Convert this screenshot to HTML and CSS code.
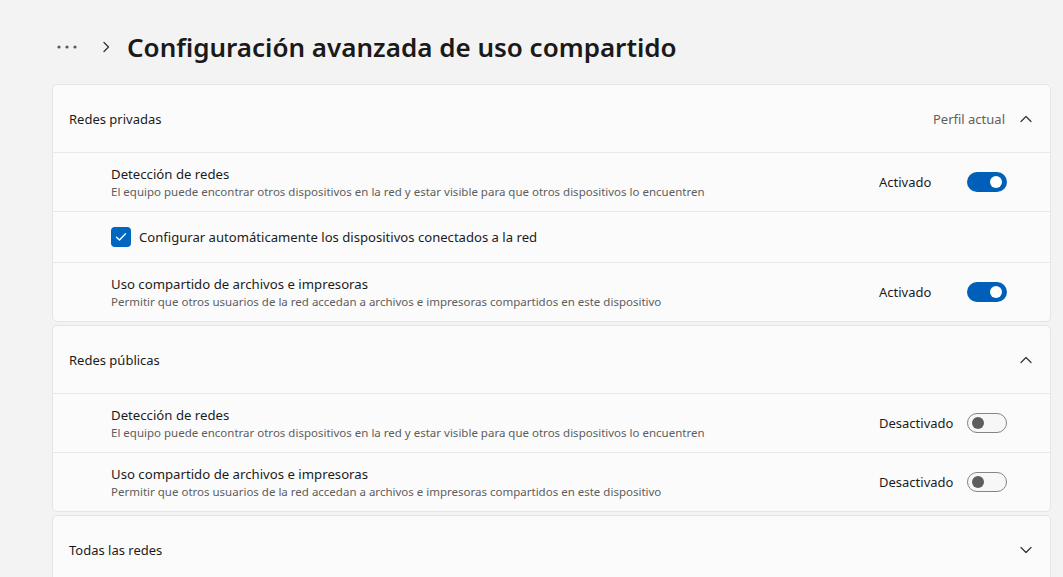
FILE: index.html
```html
<!DOCTYPE html>
<html lang="es">
<head>
<meta charset="utf-8">
<link rel="stylesheet" href="styles.css">
</head>
<body>
<div class="page">
  <div class="crumbs">
    <svg class="dots" width="24" height="6" viewBox="0 0 24 6"><circle cx="3" cy="3" r="1.6" fill="#5a5a5a"/><circle cx="11" cy="3" r="1.6" fill="#5a5a5a"/><circle cx="19" cy="3" r="1.6" fill="#5a5a5a"/></svg>
    <svg class="sep" width="8" height="12" viewBox="0 0 8 12"><path d="M2 1.5 L6.5 6 L2 10.5" fill="none" stroke="#333" stroke-width="1.3" stroke-linecap="round" stroke-linejoin="round"/></svg>
    <h1 class="title">Configuración avanzada de uso compartido</h1>
  </div>

  <div class="cards">
    <section class="card">
      <div class="card-head">
        <span class="head-title">Redes privadas</span>
        <span class="head-right">
          <span class="head-note">Perfil actual</span>
          <svg class="chev" width="12" height="8" viewBox="0 0 12 8"><path d="M1 6.5 L6 1.5 L11 6.5" fill="none" stroke="#333" stroke-width="1.2" stroke-linecap="round" stroke-linejoin="round"/></svg>
        </span>
      </div>
      <div class="row">
        <div class="text">
          <div class="row-title">Detección de redes</div>
          <div class="row-desc">El equipo puede encontrar otros dispositivos en la red y estar visible para que otros dispositivos lo encuentren</div>
        </div>
        <div class="ctrl"><span class="state">Activado</span><span class="toggle on"><span class="knob"></span></span></div>
      </div>
      <div class="row row-check">
        <span class="checkbox"><svg width="12" height="10" viewBox="0 0 12 10"><path d="M1.5 5.2 L4.5 8 L10.5 1.8" fill="none" stroke="#fff" stroke-width="1.3" stroke-linecap="round" stroke-linejoin="round"/></svg></span>
        <span class="check-label">Configurar automáticamente los dispositivos conectados a la red</span>
      </div>
      <div class="row">
        <div class="text">
          <div class="row-title">Uso compartido de archivos e impresoras</div>
          <div class="row-desc">Permitir que otros usuarios de la red accedan a archivos e impresoras compartidos en este dispositivo</div>
        </div>
        <div class="ctrl"><span class="state">Activado</span><span class="toggle on"><span class="knob"></span></span></div>
      </div>
    </section>

    <section class="card">
      <div class="card-head">
        <span class="head-title">Redes públicas</span>
        <span class="head-right">
          <svg class="chev" width="12" height="8" viewBox="0 0 12 8"><path d="M1 6.5 L6 1.5 L11 6.5" fill="none" stroke="#333" stroke-width="1.2" stroke-linecap="round" stroke-linejoin="round"/></svg>
        </span>
      </div>
      <div class="row">
        <div class="text">
          <div class="row-title">Detección de redes</div>
          <div class="row-desc">El equipo puede encontrar otros dispositivos en la red y estar visible para que otros dispositivos lo encuentren</div>
        </div>
        <div class="ctrl"><span class="state">Desactivado</span><span class="toggle off"><span class="knob"></span></span></div>
      </div>
      <div class="row">
        <div class="text">
          <div class="row-title">Uso compartido de archivos e impresoras</div>
          <div class="row-desc">Permitir que otros usuarios de la red accedan a archivos e impresoras compartidos en este dispositivo</div>
        </div>
        <div class="ctrl"><span class="state">Desactivado</span><span class="toggle off"><span class="knob"></span></span></div>
      </div>
    </section>

    <section class="card">
      <div class="card-head">
        <span class="head-title">Todas las redes</span>
        <span class="head-right">
          <svg class="chev" width="12" height="8" viewBox="0 0 12 8"><path d="M1 1.5 L6 6.5 L11 1.5" fill="none" stroke="#333" stroke-width="1.2" stroke-linecap="round" stroke-linejoin="round"/></svg>
        </span>
      </div>
    </section>
  </div>
</div>
</body>
</html>
```
FILE: styles.css
```css
html, body {
  margin: 0;
  padding: 0;
  background: #f3f3f3;
  height: 100%;
  overflow: hidden;
}
body {
  font-family: "Noto Sans", "Open Sans", sans-serif;
  color: #1b1b1b;
}
.page {
  padding-left: 52px;
  width: 999px;
}
.crumbs {
  display: flex;
  align-items: center;
  height: 74px;
  padding: 10px 0 0 4px;
}
.dots { margin-right: 22px; }
.sep { margin-right: 17px; }
.title {
  margin: 0;
  font-size: 26px;
  font-weight: 600;
  color: #1a1a1a;
}
.cards {
  display: flex;
  flex-direction: column;
  gap: 3px;
}
.card {
  background: #fbfbfb;
  border: 1px solid #e5e5e5;
  border-radius: 5px;
}
.card-head {
  height: 67px;
  display: flex;
  align-items: center;
  justify-content: space-between;
  padding: 0 18px 0 16px;
}
.head-title { font-size: 13px; }
.head-right {
  display: flex;
  align-items: center;
  gap: 15px;
}
.head-note { font-size: 13px; color: #5f5f5f; }
.row {
  display: flex;
  align-items: center;
  justify-content: space-between;
  height: 58px;
  border-top: 1px solid #e8e8e8;
  padding: 0 43px 0 58px;
}
.row-check {
  height: 50px;
  justify-content: flex-start;
  gap: 8px;
}
.row-title { font-size: 13.2px; line-height: 19px; }
.row-desc { font-size: 11.5px; line-height: 16px; color: #5d5d5d; }
.ctrl {
  display: flex;
  align-items: center;
}
.state {
  width: 88px;
  font-size: 13px;
}
.toggle {
  width: 40px;
  height: 20px;
  border-radius: 10px;
  box-sizing: border-box;
  display: flex;
  align-items: center;
}
.toggle.on {
  background: #005fb8;
  justify-content: flex-end;
  padding-right: 5px;
}
.toggle.on .knob {
  width: 12px;
  height: 12px;
  border-radius: 50%;
  background: #fff;
}
.toggle.off {
  background: #f7f7f7;
  border: 1px solid #858585;
  padding-left: 4px;
}
.toggle.off .knob {
  width: 12px;
  height: 12px;
  border-radius: 50%;
  background: #5d5d5d;
}
.checkbox {
  width: 20px;
  height: 20px;
  border-radius: 4px;
  background: #0067c0;
  display: flex;
  align-items: center;
  justify-content: center;
}
.check-label { font-size: 13.1px; }
```
